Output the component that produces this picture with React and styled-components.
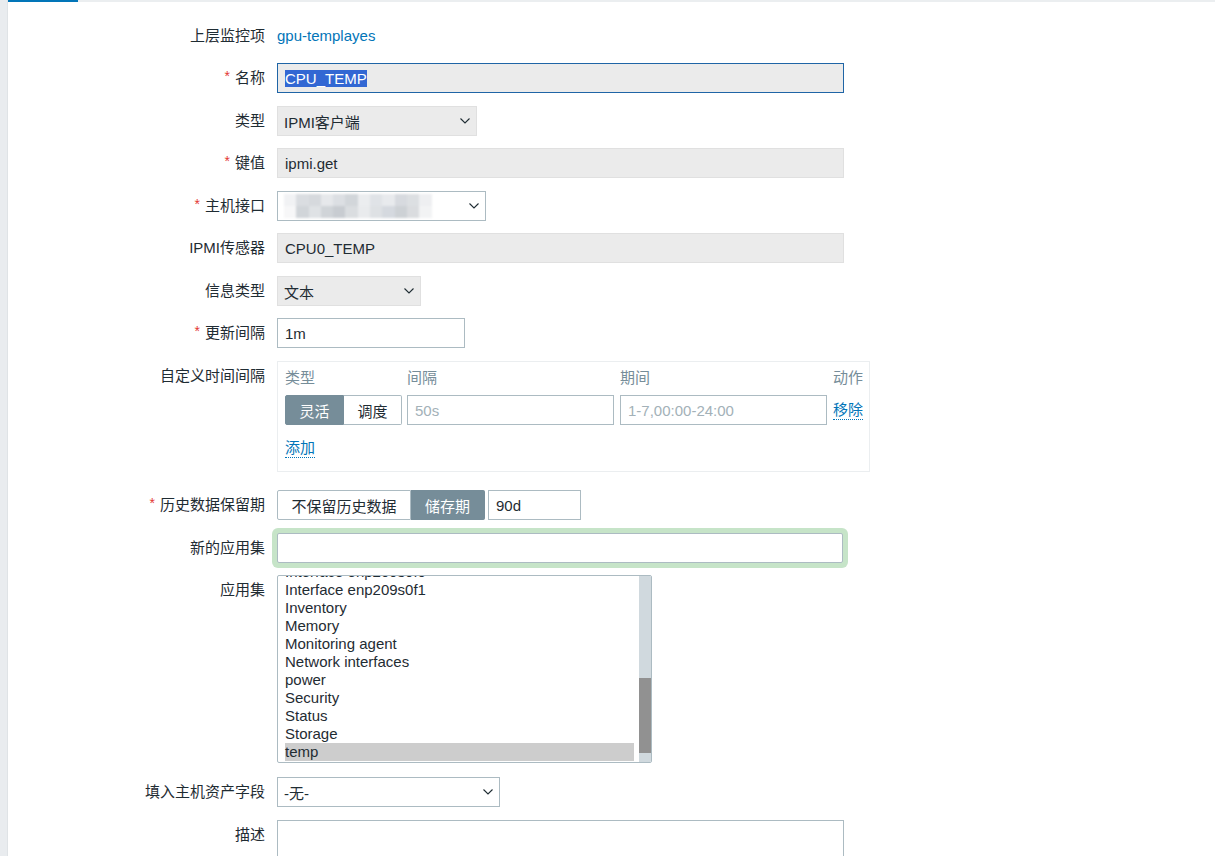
import React, { useEffect, useRef } from 'react';
import styled, { createGlobalStyle } from 'styled-components';

const GlobalStyle = createGlobalStyle`
  html, body { margin: 0; padding: 0; background: #fff; overflow: hidden; }
  body {
    font-family: "Liberation Sans", Arial, "Noto Sans CJK SC", sans-serif;
    font-size: 15px;
    color: #1f2c33;
  }
  * { box-sizing: border-box; }
`;

const Page = styled.div`
  display: flex;
  min-height: 856px;
`;

const SideStrip = styled.div`
  width: 8px;
  flex: none;
  background: #e9ecef;
  border-right: 1px solid #dfe3e6;
`;

const Main = styled.div`
  flex: 1;
  display: flex;
  flex-direction: column;
`;

const TabLine = styled.div`
  display: flex;
  height: 2px;
  background: #ebeef0;
`;

const ActiveTab = styled.div`
  width: 70px;
  background: #0275b8;
`;

const Form = styled.div`
  display: flex;
  flex-direction: column;
  padding-top: 19px;
`;

const Row = styled.div`
  display: grid;
  grid-template-columns: 257px 1fr;
  column-gap: 12px;
  align-items: start;
  margin-top: ${(p) => p.$mt || 0}px;
`;

const Label = styled.div`
  text-align: right;
  font-size: 15px;
  line-height: 30px;
  height: 30px;
  white-space: nowrap;
  color: #1f2c33;
`;

const Req = styled.span`
  color: #e33734;
  font-size: 14px;
  line-height: 0;
  margin-right: 5px;
  vertical-align: 2px;
`;

const ValueText = styled.div`
  line-height: 30px;
  height: 30px;
`;

const Link = styled.a`
  color: #0275b8;
  text-decoration: none;
  font-size: 15px;
`;

const Field = styled.input`
  width: ${(p) => p.$w}px;
  height: 30px;
  border: 1px solid ${(p) => (p.$ro ? '#e0e0e0' : '#acbbc2')};
  background: ${(p) => (p.$ro ? '#ebebeb' : '#fff')};
  padding: 0 7px;
  font: inherit;
  font-size: 15px;
  color: #1f2c33;
  border-radius: 0;
  outline: none;
  margin: 0;
  &::placeholder { color: #a3b1b8; }
`;

const FocusedField = styled.div`
  width: ${(p) => p.$w}px;
  height: 30px;
  border: 1px solid #1f65a6;
  background: #ebebeb;
  padding: 0 7px;
  display: flex;
  align-items: center;
`;

const Selected = styled.span`
  background: #3267d3;
  color: #fff;
  line-height: 17px;
  font-size: 15px;
`;

const HighlightField = styled(Field)`
  border-radius: 2px;
  box-shadow: 0 0 0 5px #c6e4c8;
`;

const SelectBox = styled.div`
  width: ${(p) => p.$w}px;
  height: 30px;
  border: 1px solid ${(p) => (p.$ro ? '#e0e0e0' : '#acbbc2')};
  background: ${(p) => (p.$ro ? '#ebebeb' : '#fff')};
  padding: 0 5px 0 6px;
  display: flex;
  align-items: center;
  justify-content: space-between;
  font-size: 15px;
`;

const Chevron = () => (
  <svg width="12" height="8" viewBox="0 0 12 8" aria-hidden="true">
    <path d="M1.5 1.5 L6 6 L10.5 1.5" fill="none" stroke="#1f2c33" strokeWidth="1.1" />
  </svg>
);

const Blur = styled.div`
  display: grid;
  grid-template-columns: repeat(12, 12.3px);
  grid-auto-rows: 12px;
  filter: blur(1.2px);
`;

const BlurCell = styled.div`
  background: ${(p) => p.$c};
`;

const Seg = styled.div`
  display: flex;
  height: 30px;
`;

const SegBtn = styled.div`
  width: ${(p) => p.$w}px;
  display: flex;
  align-items: center;
  justify-content: center;
  font-size: 15px;
  border: 1px solid ${(p) => (p.$on ? '#768d99' : '#acbbc2')};
  background: ${(p) => (p.$on ? '#768d99' : '#fff')};
  color: ${(p) => (p.$on ? '#fff' : '#1f2c33')};
  &:first-child { border-radius: 2px 0 0 2px; }
  &:last-child { border-radius: 0 2px 2px 0; }
  & + & { border-left: none; }
`;

const InlineGroup = styled.div`
  display: flex;
  gap: 3px;
`;

const IntervalBox = styled.div`
  width: 593px;
  border: 1px solid #ebeef0;
  padding: 7px 6px 13px 7px;
`;

const IntervalGrid = styled.div`
  display: grid;
  grid-template-columns: 122px 213px 213px auto;
  row-gap: 8px;
`;

const HeadCell = styled.div`
  color: #768d99;
  font-size: 15px;
  line-height: 18px;
`;

const ActionCell = styled.div`
  display: flex;
  align-items: center;
  height: 30px;
`;

const DottedLink = styled.a`
  color: #0275b8;
  font-size: 15px;
  line-height: 18px;
  text-decoration: none;
  border-bottom: 1px dotted #0275b8;
  display: inline-block;
`;

const AddRow = styled.div`
  margin-top: 14px;
  height: 19px;
`;

const ListBox = styled.div`
  width: 375px;
  height: 188px;
  border: 1px solid #acbbc2;
  border-radius: 2px;
  display: flex;
  overflow: hidden;
`;

const ListViewport = styled.div`
  flex: 1;
  overflow: hidden;
  padding: 0 5px 1px 7px;
`;

const ListItem = styled.div`
  line-height: 18px;
  height: 18px;
  font-size: 15px;
  white-space: nowrap;
  background: ${(p) => (p.$sel ? '#cdcdcd' : 'transparent')};
`;

const Track = styled.div`
  width: 12px;
  flex: none;
  background: #d0d9de;
  display: flex;
  flex-direction: column;
  padding-top: 102px;
`;

const Thumb = styled.div`
  height: 75px;
  background: #919191;
`;

const TextArea = styled.div`
  width: 567px;
  height: 70px;
  border: 1px solid #acbbc2;
`;

const blurColors = [
  '#f1f2f4', '#dadde1', '#d6d9dd', '#e6e8eb', '#dcdfe3', '#d2d6da', '#ebedef', '#e0e3e7', '#e8eaed', '#d7dadf', '#dcdfe2', '#eeeff1',
  '#f7f7f8', '#d1d5d9', '#dfe2e5', '#d0d4d8', '#c8ccd1', '#dadde0', '#e9ebed', '#dee1e4', '#d5d9df', '#cdd1d5', '#dadcdf', '#f2f3f4',
];

const apps = [
  'Interface enp209s0f0', 'Interface enp209s0f1', 'Inventory', 'Memory',
  'Monitoring agent', 'Network interfaces', 'power', 'Security', 'Status', 'Storage', 'temp',
];

export default function App() {
  const listRef = useRef(null);
  useEffect(() => {
    if (listRef.current) listRef.current.scrollTop = listRef.current.scrollHeight;
  }, []);

  return (
    <>
      <GlobalStyle />
      <Page>
        <SideStrip />
        <Main>
          <TabLine>
            <ActiveTab />
          </TabLine>
          <Form>
            <Row>
              <Label>上层监控项</Label>
              <ValueText>
                <Link href="#">gpu-templayes</Link>
              </ValueText>
            </Row>

            <Row $mt={12}>
              <Label><Req>*</Req>名称</Label>
              <FocusedField $w={567}>
                <Selected>CPU_TEMP</Selected>
              </FocusedField>
            </Row>

            <Row $mt={13}>
              <Label>类型</Label>
              <SelectBox $w={200} $ro>
                <span>IPMI客户端</span>
                <Chevron />
              </SelectBox>
            </Row>

            <Row $mt={12}>
              <Label><Req>*</Req>键值</Label>
              <Field $w={567} $ro readOnly value="ipmi.get" />
            </Row>

            <Row $mt={13}>
              <Label><Req>*</Req>主机接口</Label>
              <SelectBox $w={209}>
                <Blur>
                  {blurColors.map((c, i) => (
                    <BlurCell key={i} $c={c} />
                  ))}
                </Blur>
                <Chevron />
              </SelectBox>
            </Row>

            <Row $mt={12}>
              <Label>IPMI传感器</Label>
              <Field $w={567} $ro readOnly value="CPU0_TEMP" />
            </Row>

            <Row $mt={13}>
              <Label>信息类型</Label>
              <SelectBox $w={144} $ro>
                <span>文本</span>
                <Chevron />
              </SelectBox>
            </Row>

            <Row $mt={12}>
              <Label><Req>*</Req>更新间隔</Label>
              <Field $w={188} readOnly value="1m" />
            </Row>

            <Row $mt={13}>
              <Label>自定义时间间隔</Label>
              <IntervalBox>
                <IntervalGrid>
                  <HeadCell>类型</HeadCell>
                  <HeadCell>间隔</HeadCell>
                  <HeadCell>期间</HeadCell>
                  <HeadCell>动作</HeadCell>
                  <Seg>
                    <SegBtn $w={59} $on>灵活</SegBtn>
                    <SegBtn $w={58}>调度</SegBtn>
                  </Seg>
                  <Field $w={207} readOnly placeholder="50s" />
                  <Field $w={207} readOnly placeholder="1-7,00:00-24:00" />
                  <ActionCell>
                    <DottedLink href="#">移除</DottedLink>
                  </ActionCell>
                </IntervalGrid>
                <AddRow>
                  <DottedLink href="#">添加</DottedLink>
                </AddRow>
              </IntervalBox>
            </Row>

            <Row $mt={18}>
              <Label><Req>*</Req>历史数据保留期</Label>
              <InlineGroup>
                <Seg>
                  <SegBtn $w={134}>不保留历史数据</SegBtn>
                  <SegBtn $w={74} $on>储存期</SegBtn>
                </Seg>
                <Field $w={93} readOnly value="90d" />
              </InlineGroup>
            </Row>

            <Row $mt={13}>
              <Label>新的应用集</Label>
              <HighlightField $w={566} readOnly value="" />
            </Row>

            <Row $mt={12}>
              <Label>应用集</Label>
              <ListBox>
                <ListViewport ref={listRef}>
                  {apps.map((a) => (
                    <ListItem key={a} $sel={a === 'temp'}>{a}</ListItem>
                  ))}
                </ListViewport>
                <Track>
                  <Thumb />
                </Track>
              </ListBox>
            </Row>

            <Row $mt={14}>
              <Label>填入主机资产字段</Label>
              <SelectBox $w={223}>
                <span>-无-</span>
                <Chevron />
              </SelectBox>
            </Row>

            <Row $mt={13}>
              <Label>描述</Label>
              <TextArea />
            </Row>
          </Form>
        </Main>
      </Page>
    </>
  );
}
